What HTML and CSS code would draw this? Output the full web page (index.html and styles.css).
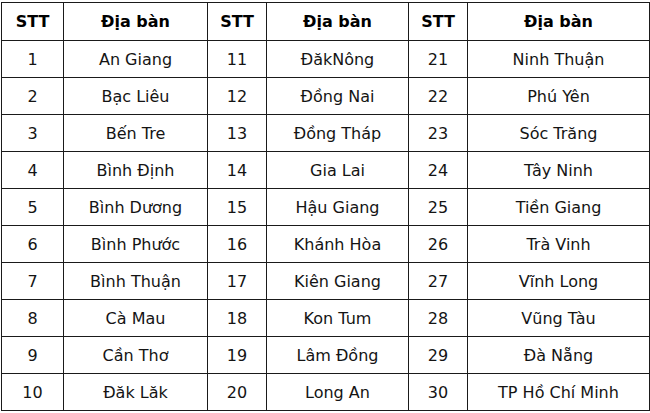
FILE: index.html
```html
<!DOCTYPE html>
<html lang="vi">
<head>
<meta charset="utf-8">
<link rel="stylesheet" href="styles.css">
</head>
<body>
<table class="grid">
  <colgroup>
    <col class="c-stt1"><col class="c-name1"><col class="c-stt2"><col class="c-name2"><col class="c-stt3"><col class="c-name3">
  </colgroup>
  <thead>
    <tr class="head"><th>STT</th><th>Địa bàn</th><th>STT</th><th>Địa bàn</th><th>STT</th><th>Địa bàn</th></tr>
  </thead>
  <tbody>
    <tr><td>1</td><td>An Giang</td><td>11</td><td>ĐăkNông</td><td>21</td><td>Ninh Thuận</td></tr>
    <tr><td>2</td><td>Bạc Liêu</td><td>12</td><td>Đồng Nai</td><td>22</td><td>Phú Yên</td></tr>
    <tr><td>3</td><td>Bến Tre</td><td>13</td><td>Đồng Tháp</td><td>23</td><td>Sóc Trăng</td></tr>
    <tr><td>4</td><td>Bình Định</td><td>14</td><td>Gia Lai</td><td>24</td><td>Tây Ninh</td></tr>
    <tr><td>5</td><td>Bình Dương</td><td>15</td><td>Hậu Giang</td><td>25</td><td>Tiền Giang</td></tr>
    <tr><td>6</td><td>Bình Phước</td><td>16</td><td>Khánh Hòa</td><td>26</td><td>Trà Vinh</td></tr>
    <tr><td>7</td><td>Bình Thuận</td><td>17</td><td>Kiên Giang</td><td>27</td><td>Vĩnh Long</td></tr>
    <tr><td>8</td><td>Cà Mau</td><td>18</td><td>Kon Tum</td><td>28</td><td>Vũng Tàu</td></tr>
    <tr><td>9</td><td>Cần Thơ</td><td>19</td><td>Lâm Đồng</td><td>29</td><td>Đà Nẵng</td></tr>
    <tr><td>10</td><td>Đăk Lăk</td><td>20</td><td>Long An</td><td>30</td><td>TP Hồ Chí Minh</td></tr>
  </tbody>
</table>
</body>
</html>
```
FILE: styles.css
```css
html, body {
  margin: 0;
  padding: 0;
  background: #ffffff;
}
body {
  padding: 2px 0 0 1px;
  font-family: "DejaVu Sans", Verdana, sans-serif;
  font-size: 16px;
  color: #141414;
}
.grid {
  border-collapse: collapse;
  table-layout: fixed;
  width: 648px;
}
.c-stt1 { width: 62px; }
.c-name1 { width: 144px; }
.c-stt2 { width: 59px; }
.c-name2 { width: 142px; }
.c-stt3 { width: 59px; }
.c-name3 { width: 182px; }
.grid th,
.grid td {
  border: 1px solid #1a1a1a;
  padding: 0;
  text-align: center;
  vertical-align: middle;
  white-space: nowrap;
}
.grid th {
  font-weight: bold;
  color: #000;
}
.grid tr.head { height: 38px; }
.grid tbody tr { height: 37px; }
```
